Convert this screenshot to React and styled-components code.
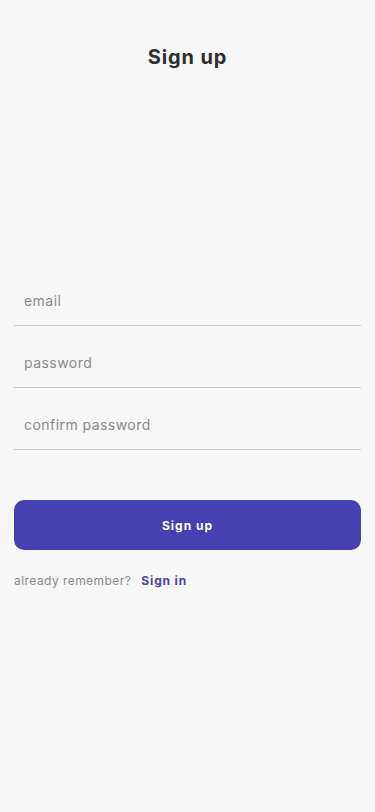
import styled, { createGlobalStyle } from "styled-components";

const GlobalStyle = createGlobalStyle`
  html, body {
    margin: 0;
    padding: 0;
    background: #f7f7f7;
    font-family: Inter, "Noto Sans", sans-serif;
  }
`;

const Screen = styled.main`
  min-height: 812px;
  display: flex;
  flex-direction: column;
  padding: 0 14px;
  box-sizing: border-box;
`;

const Title = styled.h1`
  margin: 44px 0 0;
  font-size: 20px;
  line-height: 26px;
  font-weight: 700;
  letter-spacing: 0.9px;
  color: #2e2e2e;
  text-align: center;
`;

const Form = styled.form`
  margin-top: 194px;
  display: flex;
  flex-direction: column;
`;

const Input = styled.input`
  height: 62px;
  box-sizing: border-box;
  padding: 12px 10px 0;
  border: 0;
  border-bottom: 1px solid #cccccc;
  background: transparent;
  font-family: inherit;
  font-size: 14px;
  letter-spacing: 0.45px;
  color: #333;
  outline: none;

  &::placeholder {
    color: #8a8a8a;
  }
`;

const Button = styled.button`
  margin-top: 50px;
  height: 50px;
  border: 0;
  border-radius: 10px;
  background: #4640b0;
  color: #fff;
  font-family: inherit;
  font-size: 12px;
  font-weight: 700;
  letter-spacing: 1px;
`;

const Footer = styled.p`
  margin: 23px 0 0;
  display: flex;
  align-items: center;
  gap: 10px;
  font-size: 12px;
  color: #8a8a8a;
  letter-spacing: 0.45px;
`;

const Link = styled.a`
  color: #4a42a4;
  font-weight: 700;
  text-decoration: none;
  font-size: 12px;
  letter-spacing: 0.85px;
`;

function App() {
  return (
    <>
      <GlobalStyle />
      <Screen>
        <Title>Sign up</Title>
        <Form onSubmit={(e) => e.preventDefault()}>
          <Input type="email" placeholder="email" />
          <Input type="password" placeholder="password" />
          <Input type="password" placeholder="confirm password" />
          <Button type="submit">Sign up</Button>
        </Form>
        <Footer>
          already remember?
          <Link href="#">Sign in</Link>
        </Footer>
      </Screen>
    </>
  );
}

export default App;
